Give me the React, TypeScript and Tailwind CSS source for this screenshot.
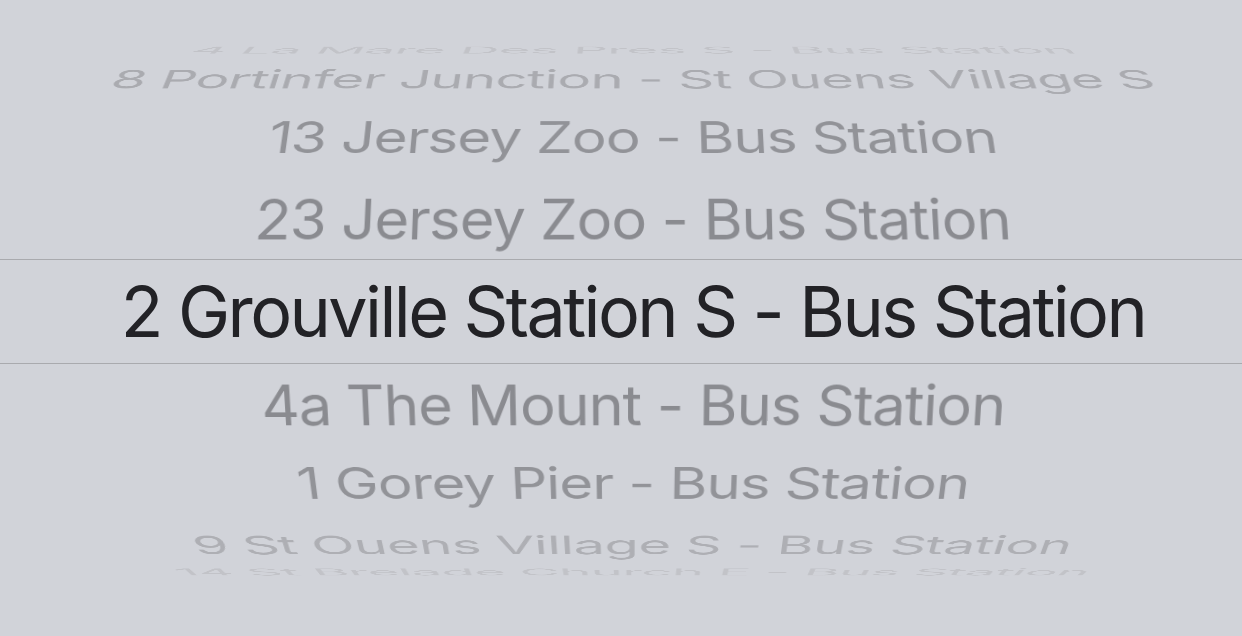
const rows = [
  { label: "4 La Mare Des Pres S - Bus Station", h: "h-[27px]", cls: "tracking-[-0.012em] text-[#c2c3c8] [transform:perspective(2200px)_translateZ(-215px)_rotateX(80deg)]" },
  { label: "8 Portinfer Junction - St Ouens Village S", h: "h-[32px]", cls: "tracking-[-0.014em] text-[#aaabb0] [transform:perspective(2200px)_translateZ(-146px)_rotateX(63deg)]" },
  { label: "13 Jersey Zoo - Bus Station", h: "h-[83px]", cls: "tracking-[-0.018em] text-[#929398] [transform:perspective(2200px)_translateZ(-66px)_rotateX(42deg)]" },
  { label: "23 Jersey Zoo - Bus Station", h: "h-[81px]", cls: "tracking-[-0.018em] text-[#8a8b90] [transform:perspective(2200px)_translateZ(-18px)_rotateX(21deg)]" },
];

const below = [
  { label: "4a The Mount - Bus Station", h: "h-[82px]", cls: "tracking-[-0.018em] text-[#8a8b90] [transform:perspective(2200px)_translateZ(-18px)_rotateX(-21deg)]" },
  { label: "1 Gorey Pier - Bus Station", h: "h-[74px]", cls: "tracking-[-0.018em] text-[#929398] [transform:perspective(2200px)_translateZ(-66px)_rotateX(-42deg)]" },
  { label: "9 St Ouens Village S - Bus Station", h: "h-[49px]", cls: "tracking-[-0.01em] text-[#aeafb4] [transform:perspective(2200px)_translateZ(-146px)_rotateX(-63deg)]" },
  { label: "14 St Brelade Church E - Bus Station", h: "h-[6px]", cls: "tracking-[-0.012em] text-[#c2c3c8] [transform:perspective(2200px)_translateZ(-215px)_rotateX(-80deg)]" },
];

function Row({ label, h, cls }: { label: string; h: string; cls: string }) {
  return (
    <div className={`${h} flex items-center justify-center pl-[24px]`}>
      <span className={`whitespace-nowrap text-[60px] leading-none ${cls}`}>{label}</span>
    </div>
  );
}

export default function App() {
  return (
    <div
      className="w-[1242px] h-[636px] overflow-hidden flex flex-col bg-[#d1d3d9]"
      style={{ fontFamily: "Inter, 'Noto Sans', sans-serif" }}
    >
      <div className="h-[36px] shrink-0" />
      {rows.map((r) => (
        <Row key={r.label} {...r} />
      ))}
      <div className="h-[105px] shrink-0 border-y border-[#a9aaae] flex items-center justify-center pl-[24px]">
        <span className="whitespace-nowrap text-[70px] leading-none tracking-[-0.037em] text-[#222226]">
          2 Grouville Station S - Bus Station
        </span>
      </div>
      {below.map((r) => (
        <Row key={r.label} {...r} />
      ))}
      <div className="flex-1" />
    </div>
  );
}
